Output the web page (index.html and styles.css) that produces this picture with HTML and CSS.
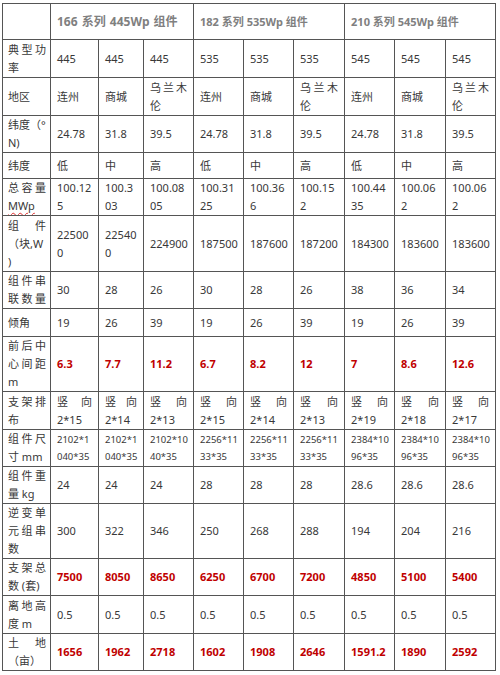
FILE: index.html
```html
<!DOCTYPE html>
<html lang="zh-CN">
<head>
<meta charset="utf-8">
<title>组件对比</title>
<link rel="stylesheet" href="styles.css">
</head>
<body>
<table class="grid">
<colgroup>
<col class="c48"><col class="c48"><col class="c45"><col class="c50"><col class="c50"><col class="c50"><col class="c51"><col class="c50"><col class="c51"><col class="c50">
</colgroup>
<tbody>
<tr class="r36"><td class="lb"></td><td class="hd hd1" colspan="3">166 系列 445Wp 组件</td><td class="hd" colspan="3">182 系列 535Wp 组件</td><td class="hd" colspan="3">210 系列 545Wp 组件</td></tr>
<tr class="r38"><td class="lb"><span class="jl">典型功</span>率</td><td>445</td><td>445</td><td>445</td><td>535</td><td>535</td><td>535</td><td>545</td><td>545</td><td>545</td></tr>
<tr class="r38"><td class="lb">地区</td><td>连州</td><td>商城</td><td><span class="jl">乌兰木</span>伦</td><td>连州</td><td>商城</td><td><span class="jl">乌兰木</span>伦</td><td>连州</td><td>商城</td><td><span class="jl">乌兰木</span>伦</td></tr>
<tr class="r37"><td class="lb"><span class="ln">纬度（°</span>N)</td><td>24.78</td><td>31.8</td><td>39.5</td><td>24.78</td><td>31.8</td><td>39.5</td><td>24.78</td><td>31.8</td><td>39.5</td></tr>
<tr class="r26"><td class="lb">纬度</td><td>低</td><td>中</td><td>高</td><td>低</td><td>中</td><td>高</td><td>低</td><td>中</td><td>高</td></tr>
<tr class="r37"><td class="lb"><span class="jl">总容量</span><span class="sq">MWp</span></td><td>100.12<br>5</td><td>100.3<br>03</td><td>100.08<br>05</td><td>100.31<br>25</td><td>100.36<br>6</td><td>100.15<br>2</td><td>100.44<br>35</td><td>100.06<br>2</td><td>100.06<br>2</td></tr>
<tr class="r56"><td class="lb"><span class="jl">组件</span><span class="ln">（块,W</span>)</td><td>22500<br>0</td><td>22540<br>0</td><td>224900</td><td>187500</td><td>187600</td><td>187200</td><td>184300</td><td>183600</td><td>183600</td></tr>
<tr class="r36"><td class="lb"><span class="jl">组件串</span><span class="jl">联数量</span></td><td>30</td><td>28</td><td>26</td><td>30</td><td>28</td><td>26</td><td>38</td><td>36</td><td>34</td></tr>
<tr class="r28"><td class="lb">倾角</td><td>19</td><td>26</td><td>39</td><td>19</td><td>26</td><td>39</td><td>19</td><td>26</td><td>39</td></tr>
<tr class="r55"><td class="lb"><span class="jl">前后中</span><span class="jl">心间距</span>m</td><td class="rd">6.3</td><td class="rd">7.7</td><td class="rd">11.2</td><td class="rd">6.7</td><td class="rd">8.2</td><td class="rd">12</td><td class="rd">7</td><td class="rd">8.6</td><td class="rd">12.6</td></tr>
<tr class="r38"><td class="lb"><span class="jl">支架排</span>布</td><td><span class="jl">竖向</span>2*15</td><td><span class="jl">竖向</span>2*14</td><td><span class="jl">竖向</span>2*13</td><td><span class="jl">竖向</span>2*15</td><td><span class="jl">竖向</span>2*14</td><td><span class="jl">竖向</span>2*13</td><td><span class="jl">竖向</span>2*19</td><td><span class="jl">竖向</span>2*18</td><td><span class="jl">竖向</span>2*17</td></tr>
<tr class="r37"><td class="lb"><span class="jl">组件尺</span>寸 mm</td><td class="sm">2102*1<br>040*35</td><td class="sm">2102*1<br>040*35</td><td class="sm">2102*10<br>40*35</td><td class="sm">2256*11<br>33*35</td><td class="sm">2256*11<br>33*35</td><td class="sm">2256*11<br>33*35</td><td class="sm">2384*10<br>96*35</td><td class="sm">2384*10<br>96*35</td><td class="sm">2384*10<br>96*35</td></tr>
<tr class="r37"><td class="lb"><span class="jl">组件重</span>量 kg</td><td>24</td><td>24</td><td>24</td><td>28</td><td>28</td><td>28</td><td>28.6</td><td>28.6</td><td>28.6</td></tr>
<tr class="r55"><td class="lb"><span class="jl">逆变单</span><span class="jl">元组串</span>数</td><td>300</td><td>322</td><td>346</td><td>250</td><td>268</td><td>288</td><td>194</td><td>204</td><td>216</td></tr>
<tr class="r37"><td class="lb"><span class="jl">支架总</span><span class="ln">数 (套)</span></td><td class="rd">7500</td><td class="rd">8050</td><td class="rd">8650</td><td class="rd">6250</td><td class="rd">6700</td><td class="rd">7200</td><td class="rd">4850</td><td class="rd">5100</td><td class="rd">5400</td></tr>
<tr class="r38"><td class="lb"><span class="jl">离地高</span>度 m</td><td>0.5</td><td>0.5</td><td>0.5</td><td>0.5</td><td>0.5</td><td>0.5</td><td>0.5</td><td>0.5</td><td>0.5</td></tr>
<tr class="r36"><td class="lb"><span class="jl">土地</span>（亩）</td><td class="rd">1656</td><td class="rd">1962</td><td class="rd">2718</td><td class="rd">1602</td><td class="rd">1908</td><td class="rd">2646</td><td class="rd">1591.2</td><td class="rd">1890</td><td class="rd">2592</td></tr>
</tbody>
</table>
</body>
</html>
```
FILE: styles.css
```css
html, body {
  background: #ffffff;
}
body {
  margin: 0;
  padding: 3px 0 0 2px;
  font-family: "Noto Sans", "Noto Sans CJK SC", sans-serif;
  font-size: 11px;
  color: #383838;
}
.grid {
  border-collapse: collapse;
  table-layout: fixed;
  width: 493px;
}
.c45 { width: 45px; }
.c48 { width: 48px; }
.c50 { width: 50px; }
.c51 { width: 51px; }
.grid td {
  border: 1px solid #555555;
  padding: 0 6px 0 6px;
  line-height: 18px;
  vertical-align: middle;
  white-space: nowrap;
  text-align: left;
  overflow: hidden;
}
.grid td.lb {
  padding: 0 4px 0 5px;
}
.r26 { height: 26px; }
.r28 { height: 28px; }
.r36 { height: 36px; }
.r37 { height: 37px; }
.r38 { height: 38px; }
.r55 { height: 55px; }
.r56 { height: 56px; }
.ln {
  display: block;
}
.jl {
  display: block;
  white-space: normal;
  text-align: justify;
  text-align-last: justify;
}
.grid td.hd {
  color: #808080;
  font-size: 11px;
  font-weight: bold;
  padding-left: 6px;
}
.grid td.hd1 {
  font-size: 12px;
  word-spacing: 1px;
}
.grid td.rd {
  color: #c00000;
  font-weight: bold;
}
.grid td.sm {
  font-size: 9.5px;
  line-height: 17px;
}
.sq {
  text-decoration: underline wavy #e03030;
  text-decoration-thickness: 1px;
  text-underline-offset: 2px;
}
```
